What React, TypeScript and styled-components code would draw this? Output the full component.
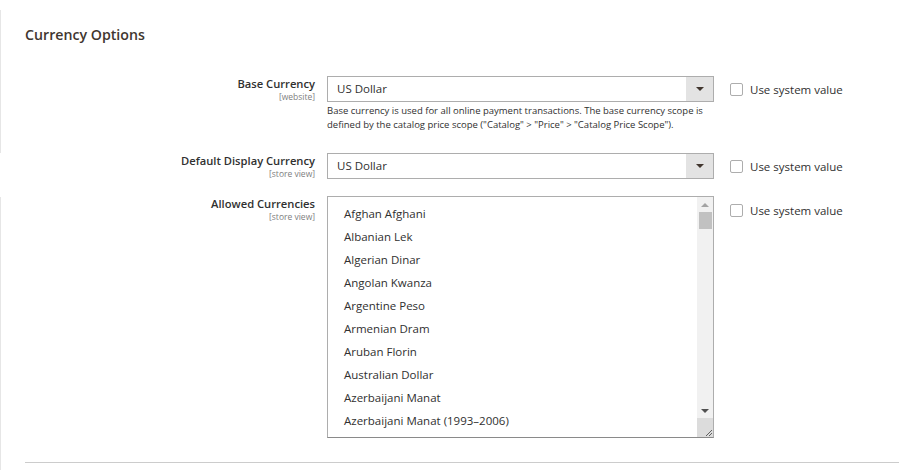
import React from 'react';
import styled, { createGlobalStyle } from 'styled-components';

const GlobalStyle = createGlobalStyle`
  html, body {
    margin: 0;
    padding: 0;
    background: #ffffff;
  }
  body {
    font-family: 'Open Sans', 'Noto Sans', sans-serif;
    color: #303030;
  }
`;

const Page = styled.div`
  width: 899px;
  height: 473px;
  box-sizing: border-box;
  padding: 22px 0 0 25px;
  overflow: hidden;
  background-image: linear-gradient(#e6e6e6, #e6e6e6), linear-gradient(#e6e6e6, #e6e6e6);
  background-repeat: no-repeat;
  background-size: 1px 143px, 1px 273px;
  background-position: 0 10px, 0 197px;
`;

const SectionTitle = styled.h2`
  margin: 0 0 28px 0;
  font-size: 14.2px;
  font-weight: 600;
  color: #41362f;
  line-height: 26px;
`;

const Fieldset = styled.div`
  display: flex;
  flex-direction: column;
`;

const Row = styled.div<{ $gapTop?: number }>`
  display: grid;
  grid-template-columns: 290px 387px auto;
  column-gap: 12px;
  align-items: start;
  margin-top: ${p => p.$gapTop ?? 0}px;
`;

const LabelCell = styled.div`
  text-align: right;
`;

const LabelText = styled.div`
  font-size: 11.2px;
  font-weight: 600;
  line-height: 15px;
  color: #303030;
`;

const Scope = styled.div`
  font-size: 8.5px;
  line-height: 11px;
  color: #808080;
`;

const Select = styled.div`
  height: 26px;
  box-sizing: border-box;
  border: 1px solid #adadad;
  display: flex;
  align-items: stretch;
  background: #fff;
`;

const SelectValue = styled.div`
  flex: 1;
  padding-left: 9px;
  font-size: 11.5px;
  line-height: 24px;
  color: #303030;
`;

const SelectArrow = styled.div`
  width: 27px;
  background: #e3e3e3;
  display: flex;
  align-items: center;
  justify-content: center;

  &::after {
    content: '';
    border-left: 4px solid transparent;
    border-right: 4px solid transparent;
    border-top: 4px solid #41362f;
  }
`;

const Note = styled.div`
  margin-top: 2px;
  font-size: 9.5px;
  line-height: 14px;
  color: #303030;
`;

const SystemValue = styled.label`
  display: flex;
  align-items: center;
  gap: 7px;
  margin-left: 4px;
  height: 26px;
  font-size: 11.5px;
  color: #303030;
`;

const SystemValueTop = styled(SystemValue)`
  height: auto;
  margin-top: 7px;
`;

const Checkbox = styled.span`
  width: 13px;
  height: 13px;
  box-sizing: border-box;
  border: 1px solid #adadad;
  border-radius: 2px;
  background: #fff;
`;

const MultiSelect = styled.div`
  height: 242px;
  box-sizing: border-box;
  border: 1px solid #adadad;
  border-bottom-color: #8a8a8a;
  display: flex;
`;

const Options = styled.div`
  flex: 1;
  padding: 5px 0 0 16px;
  overflow: hidden;
`;

const Option = styled.div`
  height: 23px;
  line-height: 23px;
  font-size: 11.5px;
  color: #303030;
`;

const Scrollbar = styled.div`
  width: 16px;
  background: #f1f1f1;
  display: flex;
  flex-direction: column;
  align-items: center;
`;

const ScrollArrow = styled.div<{ $down?: boolean }>`
  height: 15px;
  width: 16px;
  display: flex;
  align-items: center;
  justify-content: center;

  &::after {
    content: '';
    border-left: 4px solid transparent;
    border-right: 4px solid transparent;
    ${p => (p.$down ? 'border-top: 4px solid #505050;' : 'border-bottom: 4px solid #a3a3a3;')}
  }
`;

const Thumb = styled.div`
  width: 13px;
  height: 17px;
  background: #c1c1c1;
`;

const Track = styled.div`
  flex: 1;
`;

const Resizer = styled.div`
  width: 16px;
  height: 19px;
  background: #dcdcdc;
  display: flex;
  align-items: flex-end;
  justify-content: flex-end;
`;

const Divider = styled.div`
  margin-top: 24px;
  height: 1px;
  background: #cccccc;
`;

const currencies = [
  'Afghan Afghani',
  'Albanian Lek',
  'Algerian Dinar',
  'Angolan Kwanza',
  'Argentine Peso',
  'Armenian Dram',
  'Aruban Florin',
  'Australian Dollar',
  'Azerbaijani Manat',
  'Azerbaijani Manat (1993–2006)',
];

const App: React.FC = () => {
  return (
    <>
      <GlobalStyle />
      <Page>
        <SectionTitle>Currency Options</SectionTitle>
        <Fieldset>
          <Row>
            <LabelCell>
              <LabelText>Base Currency</LabelText>
              <Scope>[website]</Scope>
            </LabelCell>
            <div>
              <Select>
                <SelectValue>US Dollar</SelectValue>
                <SelectArrow />
              </Select>
              <Note>
                Base currency is used for all online payment transactions. The base currency scope is
                defined by the catalog price scope ("Catalog" &gt; "Price" &gt; "Catalog Price Scope").
              </Note>
            </div>
            <SystemValue>
              <Checkbox />
              Use system value
            </SystemValue>
          </Row>

          <Row $gapTop={21}>
            <LabelCell>
              <LabelText>Default Display Currency</LabelText>
              <Scope>[store view]</Scope>
            </LabelCell>
            <Select>
              <SelectValue>US Dollar</SelectValue>
              <SelectArrow />
            </Select>
            <SystemValue>
              <Checkbox />
              Use system value
            </SystemValue>
          </Row>

          <Row $gapTop={17}>
            <LabelCell>
              <LabelText>Allowed Currencies</LabelText>
              <Scope>[store view]</Scope>
            </LabelCell>
            <MultiSelect>
              <Options>
                {currencies.map(c => (
                  <Option key={c}>{c}</Option>
                ))}
              </Options>
              <Scrollbar>
                <ScrollArrow />
                <Thumb />
                <Track />
                <ScrollArrow $down />
                <Resizer>
                  <svg width="10" height="10" viewBox="0 0 10 10">
                    <path d="M9 3 L3 9 M9 6 L6 9" stroke="#606060" strokeWidth="1" />
                  </svg>
                </Resizer>
              </Scrollbar>
            </MultiSelect>
            <SystemValueTop>
              <Checkbox />
              Use system value
            </SystemValueTop>
          </Row>
        </Fieldset>
        <Divider />
      </Page>
    </>
  );
};

export default App;
